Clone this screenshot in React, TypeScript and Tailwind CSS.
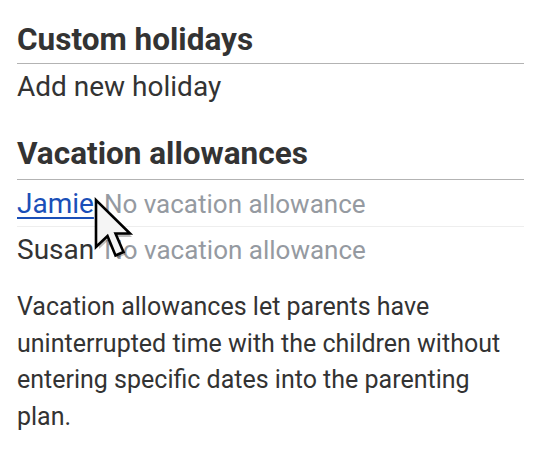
export default function App() {
  const font = { fontFamily: "Roboto, 'Liberation Sans', sans-serif" };
  return (
    <div className="w-[544px] h-[449px] bg-white pl-[17px] pr-[20px] pt-[21px] relative overflow-hidden text-[#333333]" style={font}>
      <h2 className="text-[31.5px] leading-[38px] font-bold pb-[4px] border-b border-[#b3b3b3]">Custom holidays</h2>
      <div className="mt-[4px] text-[28px] leading-[38px]">Add new holiday</div>
      <h2 className="mt-[29px] text-[31.5px] leading-[38px] font-bold pb-[6px] border-b border-[#b3b3b3]">Vacation allowances</h2>
      <div className="pt-[5px] pb-[3px] border-b border-[#eeeeee] text-[28px] leading-[38px] flex items-baseline">
        <a href="#" className="text-[#1a4fb8] underline underline-offset-[4px] decoration-[2px]">Jamie</a>
        <span className="ml-[10px] text-[26px] text-[#959aa1]">No vacation allowance</span>
      </div>
      <div className="pt-[4px] text-[28px] leading-[38px] flex items-baseline">
        <span>Susan</span>
        <span className="ml-[10px] text-[26px] text-[#959aa1]">No vacation allowance</span>
      </div>
      <p className="mt-[20px] text-[25px] leading-[36.7px]">
        Vacation allowances let parents have uninterrupted time with the children without entering specific dates into the parenting plan.
      </p>
      <svg className="absolute left-[92px] top-[196px]" width="44" height="66" viewBox="0 0 44 66">
        <path d="M5.5 5.5 L5.5 51 L16 41 L24 60 L32 56.5 L24 39 L38.5 39 Z" fill="rgba(0,0,0,0.25)" transform="translate(1.5 2)" />
        <path d="M4 4 L4 51 L15.5 40 L23.5 59.5 L31.5 56 L23.5 37.5 L38 37.5 Z" fill="#f5f5f5" stroke="#000" strokeWidth="2.6" strokeLinejoin="miter" />
      </svg>
    </div>
  );
}
